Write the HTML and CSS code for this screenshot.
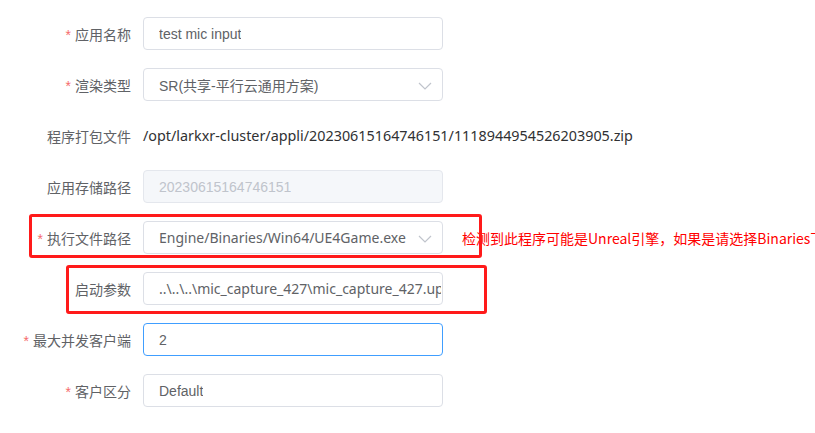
FILE: index.html
```html
<!DOCTYPE html>
<html lang="zh">
<head>
<meta charset="utf-8">
<link rel="stylesheet" href="styles.css">
</head>
<body>
<div class="form">
  <div class="row">
    <label class="label"><span class="req">*</span>应用名称</label>
    <div class="input"><span class="val">test mic input</span></div>
  </div>
  <div class="row">
    <label class="label"><span class="req">*</span>渲染类型</label>
    <div class="input select"><span class="val">SR(共享-平行云通用方案)</span>
      <svg class="arrow" width="14" height="8" viewBox="0 0 14 8"><path d="M1 1 L7 7 L13 1" fill="none" stroke="#c0c4cc" stroke-width="1.2"/></svg>
    </div>
  </div>
  <div class="row">
    <label class="label">程序打包文件</label>
    <div class="plain">/opt/larkxr-cluster/appli/20230615164746151/1118944954526203905.zip</div>
  </div>
  <div class="row">
    <label class="label">应用存储路径</label>
    <div class="input disabled"><span class="val">20230615164746151</span></div>
  </div>
  <div class="row">
    <label class="label"><span class="req">*</span>执行文件路径</label>
    <div class="input select"><span class="val wide">Engine/Binaries/Win64/UE4Game.exe</span>
      <svg class="arrow" width="14" height="8" viewBox="0 0 14 8"><path d="M1 1 L7 7 L13 1" fill="none" stroke="#c0c4cc" stroke-width="1.2"/></svg>
    </div>
    <div class="warn">检测到此程序可能是Unreal引擎，如果是请选择Binaries下的可执行文件</div>
  </div>
  <div class="row">
    <label class="label">启动参数</label>
    <div class="input param"><span class="val wide clip">..\..\..\mic_capture_427\mic_capture_427.uproject</span></div>
  </div>
  <div class="row">
    <label class="label"><span class="req">*</span>最大并发客户端</label>
    <div class="input focus"><span class="val">2</span></div>
  </div>
  <div class="row">
    <label class="label"><span class="req">*</span>客户区分</label>
    <div class="input"><span class="val">Default</span></div>
  </div>
</div>
<div class="mark mark1"></div>
<div class="mark mark2"></div>
</body>
</html>
```
FILE: styles.css
```css
html, body {
  margin: 0;
  padding: 0;
  background: #fff;
  overflow: hidden;
  width: 815px;
  height: 433px;
}
body {
  position: relative;
  font-family: "Liberation Sans", "Noto Sans CJK SC", sans-serif;
  font-size: 14px;
  color: #606266;
}
.form {
  padding-top: 17px;
  display: flex;
  flex-direction: column;
  gap: 18px;
}
.row {
  display: flex;
  align-items: center;
  height: 33px;
  white-space: nowrap;
}
.label {
  width: 143px;
  padding-right: 12px;
  box-sizing: border-box;
  text-align: right;
  font-family: "Noto Sans CJK SC", sans-serif;
  color: #606266;
  flex: none;
}
.req {
  color: #f56c6c;
  margin-right: 4px;
  font-family: "Liberation Sans", sans-serif;
}
.input {
  position: relative;
  width: 300px;
  height: 33px;
  box-sizing: border-box;
  border: 1px solid #dcdfe6;
  border-radius: 4px;
  padding: 0 30px 0 15px;
  display: flex;
  align-items: center;
  flex: none;
  overflow: hidden;
}
.input .val {
  font-family: "Liberation Sans", "Noto Sans CJK SC", sans-serif;
  color: #606266;
  overflow: hidden;
}
.input .val.wide {
  font-family: "Noto Sans", "Noto Sans CJK SC", sans-serif;
}
.input.param {
  padding-right: 0;
}
.input .val.clip {
  width: 282px;
  flex: none;
}
.input.disabled {
  background: #f5f7fa;
  border-color: #e4e7ed;
}
.input.disabled .val {
  color: #c0c4cc;
}
.input.focus {
  border-color: #409eff;
}
.arrow {
  position: absolute;
  right: 10px;
  top: 13px;
}
.plain {
  font-family: "Noto Sans", sans-serif;
  color: #303133;
  font-size: 14.35px;
}
.warn {
  margin-left: 19px;
  color: #ff0000;
  font-family: "Noto Sans CJK SC", sans-serif;
  font-size: 14px;
}
.mark {
  position: absolute;
  border: 3px solid #ff1a1a;
  border-radius: 3px;
  box-sizing: border-box;
}
.mark1 {
  left: 29px;
  top: 214px;
  width: 453px;
  height: 44px;
}
.mark2 {
  left: 66px;
  top: 265px;
  width: 421px;
  height: 49px;
}
```
